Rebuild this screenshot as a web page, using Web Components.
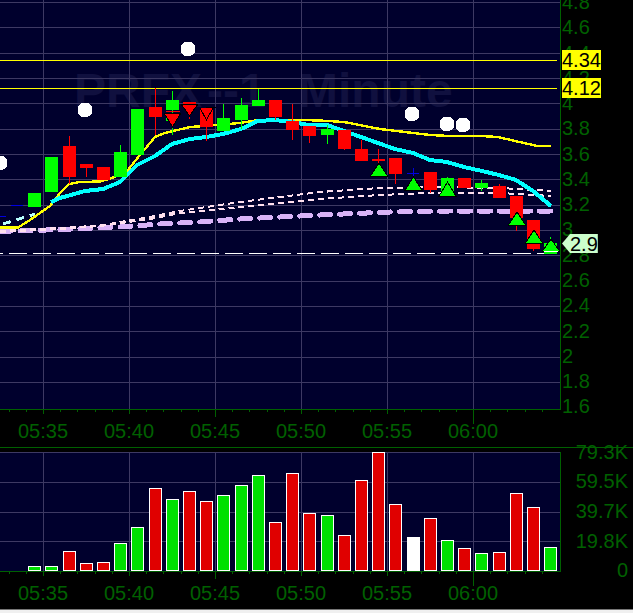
<!DOCTYPE html>
<html><head><meta charset="utf-8"><title>PRFX - 1 Minute</title>
<style>
html,body{margin:0;padding:0;background:#000;height:613px;overflow:hidden}
body{font-family:"Liberation Sans",Arial,sans-serif}
</style></head><body>
<stock-chart>
  <price-pane slot="price">
    <span slot="axis">4.8</span><span slot="axis">4.6</span><span slot="axis">4.4</span><span slot="axis">4.2</span><span slot="axis">4</span><span slot="axis">3.8</span><span slot="axis">3.6</span><span slot="axis">3.4</span><span slot="axis">3.2</span><span slot="axis">3</span><span slot="axis">2.8</span><span slot="axis">2.6</span><span slot="axis">2.4</span><span slot="axis">2.2</span><span slot="axis">2</span><span slot="axis">1.8</span><span slot="axis">1.6</span>
    <price-tag slot="tags" style="--top:50px;--left:1px;--bg:#ffff00">4.34</price-tag>
    <price-tag slot="tags" style="--top:78px;--left:1px;--bg:#ffff00">4.12</price-tag>
    <price-tag slot="tags" style="--top:234px;--left:1px;--bg:#ccffcc" arrow>2.9</price-tag>
  </price-pane>
  <time-axis slot="t1"><span>05:35</span><span>05:40</span><span>05:45</span><span>05:50</span><span>05:55</span><span>06:00</span></time-axis>
  <volume-pane slot="vol"><span>79.3K</span><span>59.5K</span><span>39.7K</span><span>19.8K</span><span>0</span></volume-pane>
  <time-axis slot="t2"><span>05:35</span><span>05:40</span><span>05:45</span><span>05:50</span><span>05:55</span><span>06:00</span></time-axis>
</stock-chart>
<script>
const BG='#00002d',GRID='#3d3963',AX='#006000';
const VX=[43,129,215,301,387,473];
const pts=a=>a.map(p=>p.join(',')).join(' ');
const rect=(x,y,w,h,f,extra='')=>`<rect x="${x}" y="${y}" width="${w}" height="${h}" fill="${f}" ${extra}/>`;
const line=(a,c,w,extra='')=>`<polyline points="${pts(a)}" fill="none" stroke="${c}" stroke-width="${w}" stroke-linejoin="round" ${extra}/>`;

class StockChart extends HTMLElement{
  constructor(){super();this.attachShadow({mode:'open'}).innerHTML=`<style>
  :host{display:flex;flex-direction:column;width:633px;height:613px;background:#000;overflow:hidden;position:relative}
  .rule{height:1px;background:${AX};flex:none}
  .gap{height:4px;flex:none}
  .strip{height:3px;background:#f0f0f0;border-top:1px solid #777;flex:none;margin-top:auto}
  </style><slot name="price"></slot><slot name="t1"></slot><div class="rule"></div><div class="gap"></div><slot name="vol"></slot><slot name="t2"></slot><div class="strip"></div>`;}
}
class PricePane extends HTMLElement{
  constructor(){super();
    const c=[
      [34,193,207,0,0,'g'],[51,157,192,0,0,'g'],[69,146,177,136,184,'r'],[86,164,168,164,177,'r'],[103,167,180,0,0,'r'],
      [120,152,177,145,177,'g'],[137,109,155,0,0,'g'],[155,107,117,88,135,'r'],[172,100,110,91,135,'g'],[206,108,127,108,141,'r'],
      [223,118,131,104,131,'g'],[241,105,120,98,129,'g'],[258,100,106,89,106,'g'],[275,100,117,100,120,'r'],[292,121,130,104,140,'r'],
      [309,126,136,126,143,'r'],[327,129,135,125,144,'g'],[344,130,149,130,150,'r'],[361,149,161,140,161,'r'],[395,158,174,158,184,'r'],
      [430,172,190,172,193,'r'],[447,178,195,177,195,'g'],[464,178,188,0,0,'r'],[481,183,188,180,191,'g'],[499,186,198,184,198,'r'],
      [516,196,218,196,231,'r'],[533,220,249,220,251,'r'],[550,243,254,237,254,'g']];
    const col={g:'#00ff00',r:'#ff0000'};
    let s='';
    for(const x of VX) s+=rect(x,0,1,409,GRID);
    for(let i=0;i<16;i++) s+=rect(0,Math.round(2+i*25.33),560,1,GRID);
    s+=rect(0,60,557,1,'#ffff00')+rect(0,88,557,1,'#ffff00');
    s+=rect(0,253,3,1,'#fff');
    for(let x=9;x<557;x+=24) s+=rect(x,253,Math.min(18,557-x),1,'#fff');
    s+=line([[0,231],[20,231],[60,229.5],[120,227],[160,224],[200,222],[240,219],[280,217],[320,215],[390,212],[450,211],[551,211]],'#d9b3f7',5,`stroke-linecap="round" stroke-dasharray="11 9"`);
    s+=line([[0,231],[60,228],[100,225.5],[150,217],[180,211],[240,202],[320,192],[380,188],[430,187],[500,188],[551,191]],'#ffe0ee',2,`stroke-dasharray="6 4"`);
    s+=line([[0,232],[60,229],[100,226],[150,219],[180,213],[240,207],[320,199],[380,195],[430,193],[500,193],[551,196]],'#ffe0ee',2,`stroke-dasharray="6 4"`);
    s+=line([[3,224],[35,214]],'#b8ffff',3,`stroke-dasharray="8 6"`);
    s+=rect(11,205,12,1,'#0000e0')+rect(0,216,6,1,'#0000e0');
    s+=line([[0,227.5],[18,227.5],[30,220],[50,206],[60,193],[69,184],[80,182],[100,181.5],[112,178],[128,170],[140,155],[155,137],[165,133],[190,127],[205,126],[240,123],[258,120],[300,120],[320,120.5],[344,122],[380,129],[430,135],[450,136],[480,136],[498,137],[515,141],[533,145],[537,146],[551,146]],'#ffff00',2.4);
    s+=line([[51,202],[60,198],[85,191],[103,189],[120,182],[137,165],[155,156],[172,144],[190,139],[206,137],[223,134],[241,129],[258,121],[275,120],[292,122],[309,125],[327,125],[344,131],[361,137],[395,149],[413,153],[430,160],[447,162],[464,167],[482,171],[499,175],[516,180],[533,191],[551,206]],'#00ffff',4);
    for(const [x,t,b,wt,wb,k] of c){
      if(wt) s+=rect(x,wt,1,wb-wt,col[k]);
      s+=rect(x-6,t,13,b-t,col[k]);
    }
    s+=rect(166,117,4,4,'#00ff00');
    s+=rect(166,111,14,1,'#ff0000')+rect(183,102,13,2,'#ff0000')+rect(189,112,1,7,'#ff0000')+rect(172,123,1,6,'#00ff00');
    s+=rect(372,159,13,2,'#ff0000')+rect(378,149,1,16,'#ff0000');
    s+=rect(407,173,12,1,'#0000e0')+rect(413,168,1,11,'#0000e0');
    const down=(x,t,h)=>`<polygon points="${x-8},${t-1} ${x+9},${t-1} ${x+.5},${t+h+1}" fill="#ff0000" stroke="#000" stroke-width="1"/>`;
    s+=down(172,114,12)+down(189,105,10);
    s+=`<polyline points="200,108 206.5,120 213,108" fill="none" stroke="#000" stroke-width="1"/>`+rect(206,107,10,1,'#000');
    const up=(x,t,h)=>`<polygon points="${x-8},${t+h+1} ${x+9},${t+h+1} ${x+.5},${t-1}" fill="#00ff00" stroke="#000" stroke-width="1"/>`;
    s+=up(378.5,164,11)+up(413,178,11)+up(447,183,12)+up(516.5,213,11)+up(533.5,231,11)+up(550.5,240,10);
    s+=rect(544,251,14,1,'#fff');
    for(const [x,y] of [[188,49],[85,110],[0,163],[412,114],[447,124],[463,125]]) s+=`<circle cx="${x}" cy="${y}" r="7.5" fill="#fff"/>`;
    s+=rect(560,0,1,410,AX)+rect(0,409,561,1,AX);
    this.attachShadow({mode:'open'}).innerHTML=`<style>
    :host{display:flex;width:633px;height:410px;flex:none;font:20px "Liberation Sans",Arial,sans-serif}
    .plot{position:relative;width:561px;height:410px;background:${BG};flex:none;overflow:hidden}
    .wm{position:absolute;left:74px;top:63px;font:bold 48px/55px "Liberation Sans",Arial,sans-serif;color:#10103f;white-space:pre;word-spacing:19px}
    .wm span{margin-left:5px}
    svg{position:relative;display:block}
    .axis{position:relative;flex:1;display:flex;flex-direction:column;margin-top:-9.95px;padding-left:1px;color:${AX}}
    ::slotted(span){display:block;height:25.27px;line-height:25.27px;flex:none}
    </style><div class="plot"><div class="wm">PRFX<span>--1</span> Minute</div><svg width="561" height="410" shape-rendering="crispEdges">${s}</svg></div>
    <div class="axis"><slot name="axis"></slot><div style="position:absolute;left:0;top:9.95px"><slot name="tags"></slot></div></div>`;}
}
class PriceTag extends HTMLElement{
  constructor(){super();this.attachShadow({mode:'open'}).innerHTML=`<style>
  :host{position:absolute;top:var(--top);left:var(--left);height:20px;background:var(--bg);color:#000;font:20px/20px "Liberation Sans",Arial,sans-serif;white-space:nowrap}
  :host([arrow]){padding-left:8px;height:19px;clip-path:polygon(0 50%,8px 0,100% 0,100% 100%,8px 100%)}
  </style><slot></slot>`;}
}
class TimeAxis extends HTMLElement{
  constructor(){super();
    let s='';
    for(let i=-2;i<30;i++){s+=rect(Math.round(43+i*17.2),0,1,2,AX);}
    VX.forEach((x,i)=>{const h=i==5?14:i==2?7:4;s+=rect(x,0,1,h,AX);});
    this.attachShadow({mode:'open'}).innerHTML=`<style>
    :host{display:block;height:37px;flex:none;color:${AX};font:20px/20px "Liberation Sans",Arial,sans-serif}
    svg{display:block}
    .row{display:flex;margin-top:-3px}
    ::slotted(span){width:86px;text-align:center;flex:none;display:block}
    </style><svg width="561" height="14" shape-rendering="crispEdges">${s}</svg><div class="row"><slot></slot></div>`;}
}
class VolumePane extends HTMLElement{
  constructor(){super();
    const v=[[34,566,'g'],[51,566,'g'],[69,551,'r'],[86,563,'r'],[103,562,'r'],[120,543,'g'],[137,527,'g'],[155,488,'r'],[172,499,'g'],[189,491,'r'],[206,501,'r'],[223,495,'g'],[241,485,'g'],[258,475,'g'],[275,522,'r'],[292,473,'r'],[309,513,'r'],[327,515,'g'],[344,535,'r'],[361,480,'r'],[378,452,'r'],[395,504,'r'],[413,537,'w'],[430,518,'r'],[447,540,'g'],[464,548,'r'],[481,553,'g'],[499,552,'r'],[516,493,'r'],[533,507,'r'],[550,547,'g']];
    const col={g:'#00e000',r:'#e00000',w:'#ffffff'};
    let s='';
    for(const x of VX) s+=rect(x,0,1,119,GRID);
    for(const y of [0,30,60,89]) s+=rect(0,y,560,1,GRID);
    for(const [x,t,k] of v) s+=`<rect x="${x-5.5}" y="${t-452+.5}" width="12" height="${570-t}" fill="${col[k]}" stroke="#fff" stroke-width="1"/>`;
    s+=rect(560,0,1,120,AX)+rect(0,119,561,1,AX);
    this.attachShadow({mode:'open'}).innerHTML=`<style>
    :host{display:flex;width:633px;height:120px;flex:none;font:20px "Liberation Sans",Arial,sans-serif}
    .plot{width:561px;height:120px;background:${BG};flex:none}
    svg{display:block}
    .axis{flex:1;color:${AX};margin-top:-14.35px;padding-right:5px;text-align:right;position:relative}
    ::slotted(span){display:block;height:29.7px;line-height:29.7px}
    </style><div class="plot"><svg width="561" height="120" shape-rendering="crispEdges">${s}</svg></div><div class="axis"><slot></slot></div>`;}
}
customElements.define('stock-chart',StockChart);
customElements.define('price-pane',PricePane);
customElements.define('price-tag',PriceTag);
customElements.define('time-axis',TimeAxis);
customElements.define('volume-pane',VolumePane);
</script>
</body></html>
